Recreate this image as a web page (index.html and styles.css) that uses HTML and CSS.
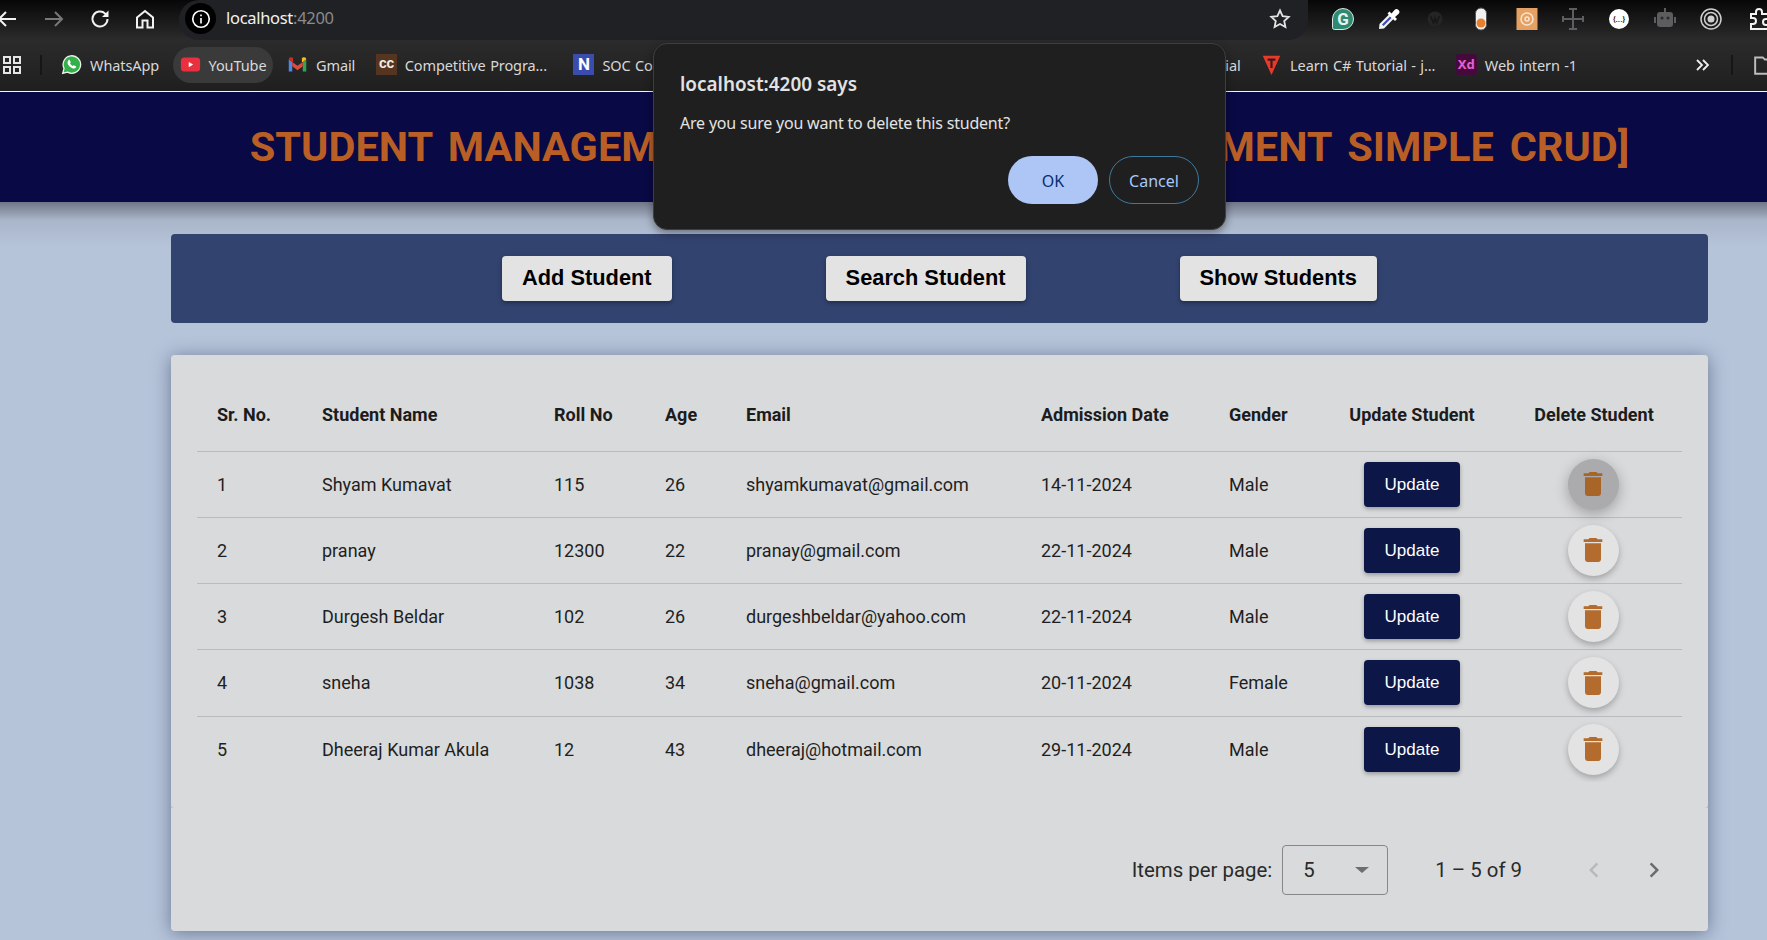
FILE: index.html
```html
<!DOCTYPE html>
<html lang="en">
<head>
    <meta charset="UTF-8">
    <meta name="viewport" content="width=device-width, initial-scale=1.0">
    <title>Student Management</title>
    <link rel="stylesheet" href="styles.css">
</head>
<body>
    <svg class="icon-defs" width="0" height="0">
        <symbol id="trash" viewBox="0 0 24 24">
            <path d="M6 19c0 1.1.9 2 2 2h8c1.1 0 2-.9 2-2V7H6v12zM19 4h-3.5l-1-1h-5l-1 1H5v2h14V4z"/>
        </symbol>
    </svg>

    <!-- browser bars -->
    <div class="toolbar">
        <svg class="tb-icon back" viewBox="0 0 24 24"><path d="M21 12H4M11 5l-7 7 7 7"/></svg>
        <svg class="tb-icon forward" viewBox="0 0 24 24"><path d="M3 12h17M13 5l7 7-7 7"/></svg>
        <svg class="tb-icon reload" viewBox="0 0 24 24"><path d="M19.5 12a7.5 7.5 0 1 1-2.3-5.4L19.5 9"/><path class="solid" d="M20.5 3.5v6.5h-6.500z"/></svg>
        <svg class="tb-icon home" viewBox="0 0 24 24"><path d="M4 10.500 12 4l8 6.500V20.500h-5.500v-7h-5v7H4z"/></svg>
        <div class="omnibox">
            <span class="site-info">
                <svg viewBox="0 0 24 24" width="22" height="22"><circle cx="12" cy="12" r="9"/><path d="M12 11v6M12 7v2"/></svg>
            </span>
            <span class="url">localhost<span class="url-port">:4200</span></span>
            <svg class="star" viewBox="0 0 24 24" width="24" height="24"><path d="M12 3.500l2.600 5.600 6.100.7-4.500 4.200 1.200 6-5.400-3-5.400 3 1.200-6-4.500-4.200 6.100-.7z"/></svg>
        </div>
        <div class="extensions">
            <svg class="ext" viewBox="0 0 24 24"><path class="ext-green" d="M12 1.500a10.500 10.500 0 1 1 0 21H3.500a2 2 0 0 1-2-2V12A10.500 10.500 0 0 1 12 1.500z"/><text x="12" y="18" class="ext-g">G</text></svg>
            <svg class="ext" viewBox="0 0 24 24"><path class="ext-drop" d="M2 22l.5-5L13 6.500l4.500 4.500L7 21.500z"/><path class="ext-blue" d="M5 17.500 13 9.500l1.500 1.500-8 8z"/><path class="ext-white" d="M12.500 4.500l2 2 3-3.500a2.500 2.500 0 0 1 4 4l-3.500 3 2 2-2 2-7.500-7.500z"/></svg>
            <svg class="ext" viewBox="0 0 24 24"><circle cx="12" cy="12" r="7.500" class="ext-wp"/><path class="ext-wp-mark" d="M7.500 9l3 7 1.500-5 1.500 5 3-7"/></svg>
            <svg class="ext" viewBox="0 0 24 24"><rect x="6.500" y="1" width="11" height="22" rx="5.500" class="ext-toggle"/><circle cx="12" cy="16" r="4.500" class="ext-orange"/></svg>
            <svg class="ext" viewBox="0 0 24 24"><rect x="1.500" y="1" width="21" height="22" class="ext-sq"/><circle cx="12" cy="12" r="6" class="ext-ring"/><circle cx="12" cy="12" r="2" class="ext-ring"/></svg>
            <svg class="ext" viewBox="0 0 24 24"><path class="ext-cross" d="M12 2v20M2 12h20M8 2h8M8 22h8M2 9v6M22 9v6"/></svg>
            <svg class="ext" viewBox="0 0 24 24"><circle cx="12" cy="12" r="10" class="ext-whitecircle"/><text x="12" y="15" class="ext-braces">{...}</text></svg>
            <svg class="ext" viewBox="0 0 24 24"><path class="ext-robot" d="M11 1h2v4h4a3 3 0 0 1 3 3v9a3 3 0 0 1-3 3H7a3 3 0 0 1-3-3V8a3 3 0 0 1 3-3h4zM1 10h2v6H1zM21 10h2v6h-2z"/><circle cx="9" cy="11" r="1.600" class="ext-eye"/><circle cx="15" cy="11" r="1.600" class="ext-eye"/></svg>
            <svg class="ext" viewBox="0 0 24 24"><circle cx="12" cy="12" r="10" class="ext-target"/><circle cx="12" cy="12" r="6.500" class="ext-target"/><circle cx="12" cy="12" r="3.500" class="ext-target-dot"/></svg>
            <svg class="ext ext-last" viewBox="0 0 24 24"><path class="ext-puzzle" d="M3 7h5V5a3 3 0 0 1 6 0v2h6v5h-2a3 3 0 0 0 0 6h2v4H3v-5h2a3 3 0 0 0 0-6H3z"/></svg>
        </div>
    </div>

    <div class="bookmarks">
        <svg class="apps" viewBox="0 0 18 18" width="18" height="18"><path d="M1 1h6v6H1zM11 1h6v6h-6zM1 11h6v6H1zM11 11h6v6h-6z"/></svg>
        <span class="bm-sep"></span>
        <a class="bm">
            <svg class="fav" viewBox="0 0 24 24"><path class="fav-wa" d="M2 22l1.500-5.500A10 10 0 1 1 7.500 20.700z"/><path class="fav-phone" d="M8.500 7c.5-.5 1.200-.5 1.500 0l1 2c.2.500 0 1-.7 1.700.8 1.500 1.800 2.400 3 3 .7-.7 1.200-.9 1.700-.7l2 1c.5.300.5 1 0 1.500-1 1.200-2.500 1.500-4.500.5-3-1.500-4.500-3.500-5-5.500-.2-1.200.2-2.300 1-3.500z"/></svg>
            WhatsApp
        </a>
        <a class="bm bm-active">
            <svg class="fav" viewBox="0 0 24 24"><rect x="1" y="4" width="22" height="16" rx="4" class="fav-yt"/><path class="fav-play" d="M10 9l5 3-5 3z"/></svg>
            YouTube
        </a>
        <a class="bm">
            <svg class="fav" viewBox="0 0 24 24"><path class="gm-blue" d="M2 20V6l4 3v11z"/><path class="gm-green" d="M18 20V9l4-3v14z"/><path class="gm-red" d="M6 9v5l6 4.500 6-4.500V9l-6 4.500z"/><path class="gm-yellow" d="M18 9l4-3c0-2-2-3-4-2l-1 .8V9z"/><path class="gm-dark" d="M2 6c0-2 2-3 4-2l1 .8V10L2 6z"/></svg>
            Gmail
        </a>
        <a class="bm">
            <span class="fav fav-cc">cc</span>
            Competitive Progra...
        </a>
        <a class="bm bm-soc">
            <span class="fav fav-n">N</span>
            SOC Coding
        </a>
        <a class="bm bm-right">Tutorial</a>
        <a class="bm">
            <svg class="fav" viewBox="0 0 24 24"><path class="fav-t" d="M2 2h20l-10 22z"/><path class="fav-t-mark" d="M7.500 6.500h9M12 6.500V16"/></svg>
            Learn C# Tutorial - j...
        </a>
        <a class="bm">
            <span class="fav fav-xd">Xd</span>
            Web intern -1
        </a>
        <svg class="chevrons" viewBox="0 0 16 16" width="16" height="16"><path d="M3 3l5 5-5 5M9 3l5 5-5 5"/></svg>
        <span class="bm-sep bm-sep-end"></span>
        <svg class="folder" viewBox="0 0 24 24" width="26" height="26"><path d="M2 5h7l2 2h11v13H2z"/></svg>
    </div>

    <!-- page -->
    <div class="page">
        <header class="app-header">
            <h1>STUDENT MANAGEMENT SYSTEM [WEB DEVELOPMENT SIMPLE CRUD]</h1>
        </header>
        <div class="shade"></div>
        <main class="content">
            <nav class="actions">
                <button class="action-btn">Add Student</button>
                <button class="action-btn">Search Student</button>
                <button class="action-btn">Show Students</button>
            </nav>

            <section class="card">
                <div class="table-wrap">
                    <table class="students">
                        <thead>
                            <tr>
                                <th class="col-sr">Sr. No.</th>
                                <th class="col-name">Student Name</th>
                                <th class="col-roll">Roll No</th>
                                <th class="col-age">Age</th>
                                <th class="col-email">Email</th>
                                <th class="col-date">Admission Date</th>
                                <th class="col-gender">Gender</th>
                                <th class="col-update">Update Student</th>
                                <th class="col-delete">Delete Student</th>
                            </tr>
                        </thead>
                        <tbody>
                            <tr>
                                <td>1</td><td>Shyam Kumavat</td><td>115</td><td>26</td><td>shyamkumavat@gmail.com</td><td>14-11-2024</td><td>Male</td>
                                <td class="center"><button class="update-btn">Update</button></td>
                                <td class="center cell-delete"><button class="delete-btn hover"><svg class="trash"><use href="#trash"/></svg></button></td>
                            </tr>
                            <tr>
                                <td>2</td><td>pranay</td><td>12300</td><td>22</td><td>pranay@gmail.com</td><td>22-11-2024</td><td>Male</td>
                                <td class="center"><button class="update-btn">Update</button></td>
                                <td class="center cell-delete"><button class="delete-btn"><svg class="trash"><use href="#trash"/></svg></button></td>
                            </tr>
                            <tr>
                                <td>3</td><td>Durgesh Beldar</td><td>102</td><td>26</td><td>durgeshbeldar@yahoo.com</td><td>22-11-2024</td><td>Male</td>
                                <td class="center"><button class="update-btn">Update</button></td>
                                <td class="center cell-delete"><button class="delete-btn"><svg class="trash"><use href="#trash"/></svg></button></td>
                            </tr>
                            <tr>
                                <td>4</td><td>sneha</td><td>1038</td><td>34</td><td>sneha@gmail.com</td><td>20-11-2024</td><td>Female</td>
                                <td class="center"><button class="update-btn">Update</button></td>
                                <td class="center cell-delete"><button class="delete-btn"><svg class="trash"><use href="#trash"/></svg></button></td>
                            </tr>
                            <tr>
                                <td>5</td><td>Dheeraj Kumar Akula</td><td>12</td><td>43</td><td>dheeraj@hotmail.com</td><td>29-11-2024</td><td>Male</td>
                                <td class="center"><button class="update-btn">Update</button></td>
                                <td class="center cell-delete"><button class="delete-btn"><svg class="trash"><use href="#trash"/></svg></button></td>
                            </tr>
                        </tbody>
                    </table>
                </div>
                <div class="paginator">
                    <span class="per-page">Items per page:</span>
                    <div class="page-select">
                        <span>5</span>
                        <span class="select-arrow"></span>
                    </div>
                    <span class="range">1 – 5 of 9</span>
                    <svg class="page-nav prev" viewBox="0 0 24 24" width="30" height="30"><path d="M15.400 7.400 14 6l-6 6 6 6 1.400-1.400L10.800 12z"/></svg>
                    <svg class="page-nav next" viewBox="0 0 24 24" width="30" height="30"><path d="M8.600 16.600 10 18l6-6-6-6-1.400 1.400L13.200 12z"/></svg>
                </div>
            </section>
        </main>
    </div>

    <!-- confirm dialog -->
    <div class="dialog">
        <div class="dialog-title">localhost:4200 says</div>
        <div class="dialog-msg">Are you sure you want to delete this student?</div>
        <div class="dialog-buttons">
            <button class="btn-ok">OK</button>
            <button class="btn-cancel">Cancel</button>
        </div>
    </div>
</body>
</html>
```

FILE: styles.css
```css
html, body {
    margin: 0;
    height: 100%;
    overflow: hidden;
}

body {
    font-family: Roboto, sans-serif;
    background-color: #b6c4da;
    color: #1f1f1f;
    width: 1767px;
    height: 940px;
    position: relative;
}

.icon-defs {
    position: absolute;
}

/* browser toolbar */
.toolbar {
    height: 40px;
    display: flex;
    align-items: flex-start;
    background: linear-gradient(#070707, #2b2b2c);
}

.tb-icon {
    width: 24px;
    height: 24px;
    margin-top: 7px;
    fill: none;
    stroke: #f2f2f2;
    stroke-width: 2;
    flex: none;
}

.tb-icon .solid {
    fill: #f2f2f2;
    stroke: none;
}

.back { margin-left: -5px; }
.forward { margin-left: 23px; stroke: #77787a; }
.reload { margin-left: 22px; }
.home { margin-left: 21px; }

.omnibox {
    margin-left: 22px;
    width: 1129px;
    height: 40px;
    flex: none;
    display: flex;
    align-items: flex-start;
    background-color: #202124;
    border-radius: 22px 0 22px 22px;
}

.site-info {
    width: 31px;
    height: 31px;
    margin: 3px 0 0 6px;
    background-color: #000;
    border-radius: 50%;
    display: flex;
    align-items: center;
    justify-content: center;
}

.site-info svg {
    fill: none;
    stroke: #fff;
    stroke-width: 1.8;
}

.url {
    margin: 6px 0 0 10px;
    font-family: "Noto Sans", sans-serif;
    font-size: 16.5px;
    line-height: 24px;
    color: #f1f1f1;
    letter-spacing: -0.3px;
}

.url-port {
    color: #8a8b8d;
}

.star {
    margin: 7px 16px 0 auto;
    fill: none;
    stroke: #e3e3e3;
    stroke-width: 1.800;
}

.extensions {
    display: flex;
    margin-left: 23px;
    gap: 22px;
    padding-top: 7px;
    flex: none;
}

.ext {
    width: 24px;
    height: 24px;
    flex: none;
}

.ext-last {
    margin-left: 3px;
}

.ext-green { fill: #2f8a73; stroke: #d9e8e4; stroke-width: 1; }
.ext-g { fill: #e9f3f0; font: bold 17px Roboto, sans-serif; text-anchor: middle; }
.ext-drop { fill: #f3f3f3; }
.ext-blue { fill: #3a49b8; }
.ext-white { fill: #fff; }
.ext-wp { fill: #242525; }
.ext-wp-mark { fill: none; stroke: #161717; stroke-width: 1.500; }
.ext-toggle { fill: #f1f1f1; stroke: #555; stroke-width: 1; }
.ext-orange { fill: #e87f2c; }
.ext-sq { fill: #e4a163; }
.ext-ring { fill: none; stroke: #f8e4cf; stroke-width: 1.500; }
.ext-cross { fill: none; stroke: #5d5e60; stroke-width: 2; }
.ext-whitecircle { fill: #fff; }
.ext-braces { fill: #222; font: bold 8px Roboto, sans-serif; text-anchor: middle; }
.ext-robot { fill: #5c5d5f; }
.ext-eye { fill: #2c2c2d; }
.ext-target { fill: none; stroke: #cfcfcf; stroke-width: 1.500; }
.ext-target-dot { fill: #cfcfcf; }
.ext-puzzle { fill: none; stroke: #f2f2f2; stroke-width: 2; }

/* bookmarks bar */
.bookmarks {
    height: 52px;
    display: flex;
    align-items: center;
    padding-bottom: 2px;
    box-sizing: border-box;
    background: linear-gradient(#2b2b2c, #1f1f20);
    border-bottom: 1px solid #f4f4f4;
    font-family: "Noto Sans", sans-serif;
    font-size: 14.500px;
    color: #d8d8d8;
    white-space: nowrap;
    overflow: hidden;
}

.apps {
    margin-left: 3px;
    flex: none;
    fill: none;
    stroke: #e6e6e6;
    stroke-width: 2;
}

.bm-sep {
    width: 2px;
    height: 20px;
    background-color: #161617;
    margin-left: 19px;
    flex: none;
}

.bm {
    display: flex;
    align-items: center;
    gap: 8px;
    height: 36px;
    padding: 0 7px;
    margin-left: 6.5px;
    border-radius: 18px;
    letter-spacing: -0.1px;
    word-spacing: 0.8px;
    flex: none;
}

.bookmarks .bm-sep + .bm {
    margin-left: 12px;
}

.bm-active {
    background-color: #3a3a3b;
}

.bm-soc {
    margin-left: 12.5px;
}

.bm-right {
    margin-left: auto;
}

.fav {
    width: 21px;
    height: 21px;
    flex: none;
}

.fav-wa { fill: #34b04a; stroke: #e9f4ea; stroke-width: 1.500; }
.fav-phone { fill: #fff; }
.fav-yt { fill: #e8303f; }
.fav-play { fill: #fff; }
.gm-blue { fill: #4a88e8; }
.gm-green { fill: #33a552; }
.gm-red { fill: #e04a3c; }
.gm-yellow { fill: #f5bd1f; }
.gm-dark { fill: #c5301f; }
.fav-t { fill: #e8392b; }
.fav-t-mark { fill: none; stroke: #3a1a18; stroke-width: 2.500; }

.fav-cc {
    background-color: #553520;
    color: #f0ebe6;
    font: bold 14px/20px "Liberation Mono", monospace;
    text-align: center;
    letter-spacing: -1px;
}

.fav-n {
    background-color: #3a4dac;
    color: #fff;
    font: bold 17px/21px Roboto, sans-serif;
    text-align: center;
    letter-spacing: 0;
}

.fav-xd {
    background-color: #450a3c;
    color: #e760d2;
    border-radius: 3px;
    font: bold 13px/21px "Noto Sans", sans-serif;
    text-align: center;
    letter-spacing: 0;
}

.chevrons {
    margin-left: 110px;
    flex: none;
    fill: none;
    stroke: #eee;
    stroke-width: 1.800;
}

.bm-sep-end {
    margin-left: 21px;
}

.folder {
    margin-left: 20px;
    margin-right: -12px;
    flex: none;
    fill: none;
    stroke: #bdbdbd;
    stroke-width: 1.800;
}

/* page is wider than the window, right side gets cut */
.page {
    width: 1879px;
    position: relative;
}

.app-header {
    height: 110px;
    box-sizing: border-box;
    padding-bottom: 2px;
    display: flex;
    align-items: center;
    justify-content: center;
    background-color: #090945;
}

.app-header h1 {
    margin: 0;
    font-size: 41.5px;
    font-weight: 700;
    color: #b95f26;
    word-spacing: 5.5px;
    white-space: nowrap;
}

.shade {
    height: 45px;
    margin-bottom: -45px;
    background: linear-gradient(#6f7687, #a9b5c8 18px, #b6c4da 45px);
}

.content {
    width: 1537px;
    margin: 0 auto;
    padding-top: 32px;
    position: relative;
}

.actions {
    height: 89px;
    display: flex;
    align-items: center;
    justify-content: center;
    gap: 154px;
    background-color: #32436f;
    border-radius: 4px;
    margin-bottom: 32px;
}

.action-btn {
    height: 45px;
    padding: 0 20px 2px;
    border: none;
    border-radius: 4px;
    background-color: #e3e3e3;
    color: #000;
    font-family: "Liberation Sans", Arial, sans-serif;
    font-size: 21.8px;
    font-weight: 700;
    box-shadow: 0 2px 4px rgba(0, 0, 0, .35);
}

.card {
    border-radius: 4px;
    box-shadow: 0 2px 18px rgba(30, 45, 80, .5);
}

.table-wrap {
    background-color: #d8dadc;
    padding: 24px 26px 26px;
    border-radius: 4px;
}

.students {
    width: 100%;
    table-layout: fixed;
    border-collapse: collapse;
    display: block;
    overflow: hidden;
    font-size: 18px;
}

.students thead tr {
    height: 72px;
}

.students tbody tr {
    height: 66.25px;
}

.students th {
    text-align: left;
    font-weight: 700;
    padding: 0 0 0 20px;
    border-bottom: 1px solid #b9bbbe;
    white-space: nowrap;
    color: #1c1c1c;
    box-sizing: border-box;
}

.students td {
    padding: 0 0 0 20px;
    border-bottom: 1px solid #b9bbbe;
    white-space: nowrap;
    box-sizing: border-box;
}

.students tbody tr:last-child td {
    border-bottom: none;
}

.col-sr { width: 105px; }
.col-name { width: 232px; }
.col-roll { width: 111px; }
.col-age { width: 81px; }
.col-email { width: 295px; }
.col-date { width: 188px; }
.col-gender { width: 109px; }
.col-update { width: 188px; }
.col-delete { width: 176px; }

.students .col-update,
.students .col-delete,
.students .center {
    text-align: center;
    padding: 0;
}

.students .cell-delete {
    padding-right: 2px;
}

.update-btn {
    width: 96px;
    height: 45px;
    padding: 1px 0 0;
    border: none;
    border-radius: 4px;
    background-color: #0c1747;
    color: #fff;
    font-family: "Liberation Sans", Arial, sans-serif;
    font-size: 17px;
    box-shadow: 0 2px 4px rgba(0, 0, 0, .3);
    vertical-align: middle;
}

.delete-btn {
    width: 51px;
    height: 51px;
    padding: 0;
    border: none;
    border-radius: 50%;
    background-color: #e3e3e3;
    display: inline-flex;
    align-items: center;
    justify-content: center;
    box-shadow: 0 3px 6px rgba(0, 0, 0, .25);
    vertical-align: middle;
}

.delete-btn.hover {
    background-color: #ababad;
    box-shadow: 0 4px 14px rgba(0, 0, 0, .28);
}

.trash {
    width: 32px;
    height: 32px;
    fill: #b36c2d;
}

.delete-btn.hover .trash {
    fill: #a86528;
}

.paginator {
    height: 123px;
    display: flex;
    align-items: center;
    justify-content: flex-end;
    padding-right: 39px;
    background-color: #d8dadc;
    border-radius: 0 0 4px 4px;
    font-size: 20.4px;
    color: #2a2a2a;
}

.page-select {
    width: 106px;
    height: 50px;
    margin-left: 10px;
    display: flex;
    align-items: center;
    justify-content: space-between;
    padding: 0 18px 0 20px;
    box-sizing: border-box;
    border: 1px solid #85878a;
    border-radius: 4px;
}

.select-arrow {
    width: 0;
    height: 0;
    border-left: 7px solid transparent;
    border-right: 7px solid transparent;
    border-top: 6px solid #6c6e71;
}

.range {
    margin-left: 47px;
    margin-right: 57px;
}

.page-nav {
    fill: #6a6b6d;
}

.page-nav.prev {
    fill: #b7b9bc;
    margin-right: 30px;
}

/* dialog over the page */
.dialog {
    position: absolute;
    left: 653px;
    top: 43px;
    width: 573px;
    height: 187px;
    box-sizing: border-box;
    padding: 24px 26px;
    background-color: #1f1f1f;
    border: 1px solid #3e3e3e;
    border-radius: 14px;
    box-shadow: 0 3px 8px rgba(0, 0, 0, .4);
    font-family: "Noto Sans", sans-serif;
    color: #e3e3e3;
}

.dialog-title {
    font-size: 18.9px;
    font-weight: 600;
    line-height: 33px;
}

.dialog-msg {
    font-size: 16px;
    line-height: 24px;
    margin-top: 10px;
    letter-spacing: -0.2px;
}

.dialog-buttons {
    display: flex;
    justify-content: flex-end;
    gap: 11px;
    margin-top: 21px;
}

.dialog-buttons button {
    width: 90px;
    height: 48px;
    border-radius: 24px;
    font-family: "Noto Sans", sans-serif;
    font-size: 16px;
    padding: 1px 0 0;
}

.btn-ok {
    background-color: #adc6f6;
    border: none;
    color: #062e6f;
}

.btn-cancel {
    background-color: transparent;
    border: 1px solid #3d7a9e;
    color: #a8c7fa;
}
```
